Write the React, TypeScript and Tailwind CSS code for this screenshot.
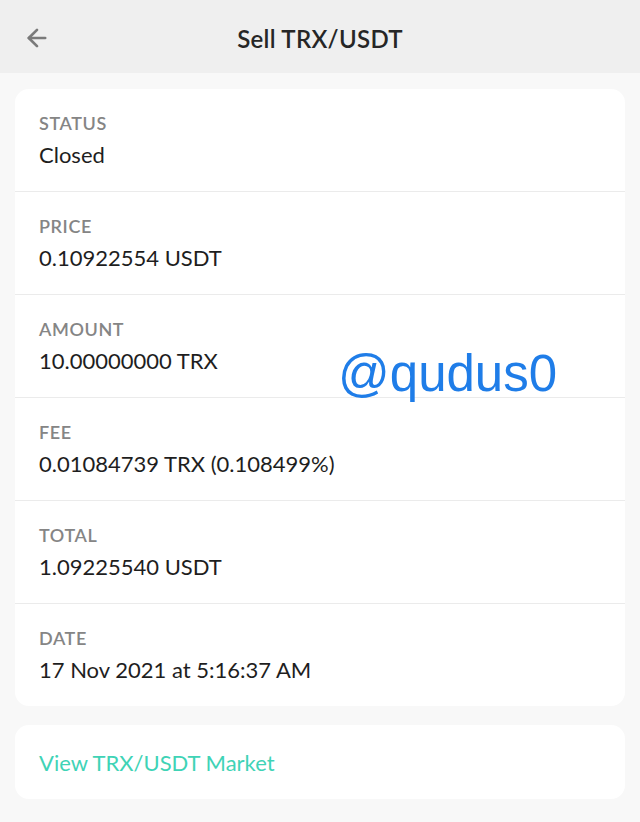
import { ArrowLeft } from "lucide-react";

const ROWS = [
  { label: "STATUS", value: "Closed" },
  { label: "PRICE", value: "0.10922554 USDT" },
  { label: "AMOUNT", value: "10.00000000 TRX" },
  { label: "FEE", value: "0.01084739 TRX (0.108499%)" },
  { label: "TOTAL", value: "1.09225540 USDT" },
  { label: "DATE", value: "17 Nov 2021 at 5:16:37 AM" },
];

export default function App() {
  return (
    <div
      className="relative min-h-[822px] w-[640px] bg-[#f8f8f8] text-[#1e1e1e]"
      style={{ fontFamily: "Lato, 'Open Sans', sans-serif" }}
    >
      {/* Header */}
      <div className="relative flex h-[73px] items-center justify-center bg-[#efefef]">
        <button className="absolute left-[23px] top-[24px] text-[#7a7a7a]">
          <ArrowLeft size={28} strokeWidth={2.3} />
        </button>
        <h1 className="mt-[4px] text-[24px] font-semibold tracking-[0.3px] text-[#262626]">
          Sell TRX/USDT
        </h1>
      </div>

      {/* Details card */}
      <div className="mx-[15px] mt-[16px] rounded-[14px] bg-white">
        {ROWS.map((row, i) => (
          <div
            key={row.label}
            className={`px-[24px] pt-[23px] pb-[22px] ${
              i < ROWS.length - 1 ? "border-b border-[#ebebeb]" : ""
            }`}
          >
            <div className="text-[18px] font-semibold leading-[22px] tracking-[0.6px] text-[#858585]">
              {row.label}
            </div>
            <div className="mt-[7px] text-[22px] leading-[28px]">{row.value}</div>
          </div>
        ))}
      </div>

      {/* Market link */}
      <div className="mx-[15px] mt-[19px] flex h-[74px] items-center rounded-[14px] bg-white px-[24px]">
        <span className="text-[22px] text-[#3fd3b6]">View TRX/USDT Market</span>
      </div>

      {/* Watermark */}
      <div
        className="absolute left-[338px] top-[344px] text-[51px] leading-[60px] text-[#1f7de8]"
        style={{ fontFamily: "'Liberation Sans', Arial, sans-serif" }}
      >
        @qudus0
      </div>
    </div>
  );
}
